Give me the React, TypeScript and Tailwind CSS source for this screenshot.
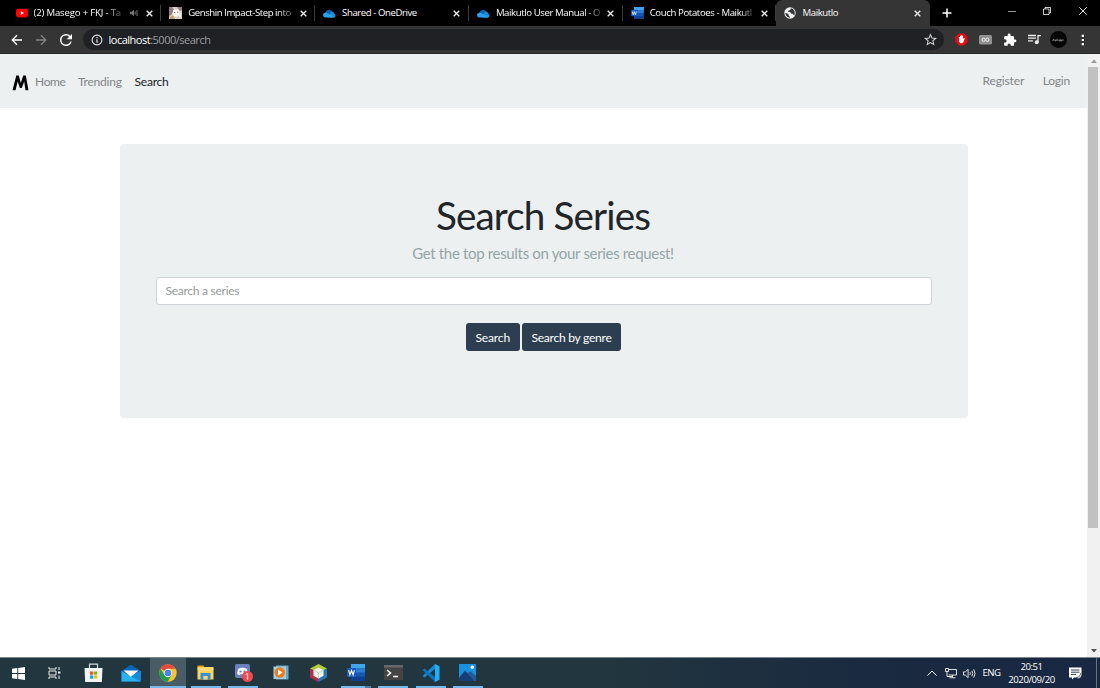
import React from 'react';

const YouTube = () => (
  <svg viewBox="0 0 12 12" className="h-3 w-3 shrink-0"><rect y="1.8" width="12" height="8.6" rx="2.3" fill="#f00" /><path d="M4.8 4.2 8 6.1 4.8 8z" fill="#fff" /></svg>
);
const Genshin = () => (
  <svg viewBox="0 0 13 12" className="h-3 w-[13px] shrink-0"><rect width="13" height="12" fill="#d8cdc8" /><path d="M0 0h3l2 3-3 5-2 1zM8 0h5v3l-2 1z" fill="#8f7f85" /><path d="M4 3l5-1 2 4-3 4-4-1z" fill="#fff4ea" /><path d="M1 10l3-2 2 4H1z" fill="#c5a56b" /><path d="M9 8l3-2v5z" fill="#edf0f6" /><path d="M5 5h1.300v.7H5zM8 4.700h1.300v.7H8z" fill="#515783" /></svg>
);
const OneDrive = () => (
  <svg viewBox="0 0 13 9" className="h-[9px] w-[13px] shrink-0"><path d="M2.200 4A3.800 3.800 0 0 1 9 2.400L12 5 4 8 1 5z" fill="#0864b8" /><path d="M8.200 2.500a3 3 0 0 1 3 2.200 2.100 2.100 0 0 1-.4 3.900H5z" fill="#198edb" /><path d="M0 5.800C.2 4 2.400 3.300 3.800 4.100l7.800 4c-.4.4-.8.5-1.300.5H2.500C1 8.600 0 7.400 0 5.800z" fill="#27a5ec" /></svg>
);
const Word = ({ className }: { className: string }) => (
  <svg viewBox="0 0 18 17" className={className}><path d="M4 0h14v17H4z" fill="#1757ad" /><path d="M4 0h14v4.300H4z" fill="#41a5ee" /><path d="M4 4.300h14v4.200H4z" fill="#2b7cd3" /><path d="M4 12.700h14V17H4z" fill="#103f91" /><rect y="4" width="9" height="9" rx=".7" fill="#185abd" /><path d="m1.600 6.200 1.300 4.800 1.600-4.500 1.600 4.500 1.300-4.800" fill="none" stroke="#fff" strokeWidth="1.100" /></svg>
);
const Globe = () => (
  <svg viewBox="0 0 12 12" className="h-3 w-3 shrink-0"><circle cx="6" cy="6" r="5.700" fill="#f1f3f4" /><path d="M1.300 6 3 6.300l1.700 1.300v1.200l1.200.9v1C3.300 10.600 1.400 8.600 1.300 6zM6.600 1.300l.2 1-1 1-1.600.5-.3 1 2.200.3 1.200 1.600 1.500.1.800 1.300.8.300C11.600 5.400 10 1.600 6.600 1.300z" fill="#35363a" /></svg>
);
const X = () => (
  <svg viewBox="0 0 8 8" className="h-[7px] w-[7px] shrink-0"><path d="m.8.8 6.400 6.400M7.200.8.800 7.200" stroke="#f1f1f1" strokeWidth="1.500" /></svg>
);
const Speaker = () => (
  <svg viewBox="0 0 9 8" className="h-2 w-[9px]"><path d="M0 2.800h1.700L4 .8v6.400L1.700 5.200H0z" fill="#777" /><path d="M5.200 2.500v3M7 1v6" stroke="#777" fill="none" /></svg>
);

type TabProps = { icon: React.ReactNode; title: string; muted?: boolean; textClass: string; active?: boolean };
const Tab = ({ icon, title, muted, textClass, active }: TabProps) => (
  <div className={`flex h-[26px] w-[153.8px] shrink-0 items-center pl-2 ${active ? 'rounded-t-md bg-[#353535] pr-[9px]' : ''}`}>
    <div className="flex min-w-0 flex-1 items-center gap-[6px]">
      {icon}
      <span className={`whitespace-nowrap text-[9.600px] leading-[14px] text-white ${textClass}`}>{title}</span>
    </div>
    {muted && <div className="mr-[7px]"><Speaker /></div>}
    <X />
    {!active && <div className="ml-[7.500px] h-4 w-px bg-[#3c3c3c]" />}
  </div>
);

const TabStrip = () => (
  <div className="flex h-[26px] bg-black">
    <div className="flex pl-[7.500px]">
      <Tab icon={<YouTube />} title="(2) Masego + FKJ - Ta" muted textClass="tracking-[-0.17px] [mask-image:linear-gradient(90deg,#000_82%,#0004)]" />
      <Tab icon={<Genshin />} title="Genshin Impact-Step into" textClass="tracking-[-0.45px] [mask-image:linear-gradient(90deg,#000_86%,#0006)]" />
      <Tab icon={<OneDrive />} title="Shared - OneDrive" textClass="tracking-[-0.43px]" />
      <Tab icon={<OneDrive />} title="Maikutlo User Manual - O" textClass="tracking-[-0.4px] [mask-image:linear-gradient(90deg,#000_85%,#0004)]" />
      <Tab icon={<Word className="h-3 w-[13px] shrink-0" />} title="Couch Potatoes - Maikutl" textClass="tracking-[-0.38px] [mask-image:linear-gradient(90deg,#000_88%,#0004)]" />
      <Tab icon={<Globe />} title="Maikutlo" active textClass="tracking-[-0.4px]" />
    </div>
    <div className="flex flex-1 items-center pl-[11.500px]">
      <svg viewBox="0 0 10 10" className="h-[10px] w-[10px]"><path d="M5 .5v9M.5 5h9" stroke="#fff" strokeWidth="1.500" /></svg>
    </div>
    <div className="flex w-[92px] items-start justify-between pr-[13.500px] pt-[7px]">
      <svg viewBox="0 0 8 8" className="h-2 w-2"><path d="M0 4.500h8" stroke="#bbb" strokeWidth=".8" /></svg>
      <svg viewBox="0 0 8 8" className="h-2 w-2"><path d="M.5 2h5.500v5.500H.5zM2 2V.5h5.500V6H6" fill="none" stroke="#fff" strokeWidth=".8" /></svg>
      <svg viewBox="0 0 8 8" className="h-2 w-2"><path d="m.3.3 7.400 7.400M7.700.3.300 7.700" stroke="#fff" strokeWidth=".9" /></svg>
    </div>
  </div>
);

const Toolbar = () => (
  <div className="flex h-7 items-center border-b border-[#292929] bg-[#353535]">
    <div className="flex w-[83px] items-center gap-[12.300px] pl-[11px]">
      <svg viewBox="0 0 12 12" className="h-3 w-3"><path d="M11 6H1.600M6 1.300 1.300 6 6 10.700" fill="none" stroke="#fff" strokeWidth="1.400" /></svg>
      <svg viewBox="0 0 12 12" className="h-3 w-3"><path d="M1 6h9.400M6 1.300 10.700 6 6 10.700" fill="none" stroke="#858585" strokeWidth="1.300" /></svg>
      <svg viewBox="4 4 16 16" className="h-3 w-3"><path d="M17.650 6.350A8 8 0 1 0 19.730 14h-2.080A6 6 0 1 1 12 6c1.660 0 3.140.69 4.220 1.780L13 11h7V4z" fill="#fff" /></svg>
    </div>
    <div className="flex h-[21px] w-[861px] items-center rounded-full bg-[#202124] pl-2 pr-[7px]">
      <svg viewBox="0 0 12 12" className="h-3 w-3"><circle cx="6" cy="6" r="4.900" fill="none" stroke="#e4e4e4" strokeWidth="1.100" /><path d="M6 5.300v3.500M6 3v1.200" stroke="#e4e4e4" strokeWidth="1.200" /></svg>
      <span className="ml-[5.500px] flex-1 text-[11px] leading-4 tracking-[-0.49px] text-[#9c9da0]"><span className="text-white">localhost</span>:5000/search</span>
      <svg viewBox="0 0 24 24" className="h-[13px] w-[13px]"><path d="m12 3 2.700 6.300 6.900.600-5.200 4.500 1.600 6.700L12 17.500l-6 3.600 1.600-6.700-5.200-4.500 6.900-.6z" fill="none" stroke="#d4d4d4" strokeWidth="1.900" /></svg>
    </div>
    <div className="flex flex-1 items-center pl-[10.500px]">
      <svg viewBox="0 0 13 13" className="h-[13px] w-[13px]"><path d="M3.900.4h5.200l3.500 3.500v5.200l-3.500 3.500H3.900L.4 9.100V3.900z" fill="#e40d12" /><path d="M4 6V4h1v1.700V2.700h1V5 2.200h1V5 2.700h1v3l1.300-.8.5.500-1.700 4-1.300.9H5.500L4 8.800z" fill="#fff" /></svg>
      <svg viewBox="0 0 13 10" className="ml-[11px] h-[10px] w-[13px]"><rect width="13" height="9.500" rx="1.500" fill="#929292" /><circle cx="4.700" cy="4.800" r="1.600" fill="none" stroke="#eee" /><circle cx="8.300" cy="4.800" r="1.600" fill="none" stroke="#eee" /></svg>
      <svg viewBox="0 0 24 24" className="ml-[11px] h-[14px] w-[14px]"><path d="M20.500 11H19V7a2 2 0 0 0-2-2h-4V3.500a2.500 2.500 0 0 0-5 0V5H4a2 2 0 0 0-2 2v3.800h1.500a2.700 2.700 0 0 1 0 5.400H2V20a2 2 0 0 0 2 2h3.800v-1.500a2.700 2.700 0 0 1 5.400 0V22H17a2 2 0 0 0 2-2v-4h1.500a2.500 2.500 0 0 0 0-5z" fill="#fff" /></svg>
      <svg viewBox="0 0 13 11" className="ml-[11px] h-[11px] w-[13px]"><path d="M0 1.500h8M0 4.200h8M0 6.900h5" stroke="#eee" strokeWidth="1.300" /><path d="M10 8V1.600h3" fill="none" stroke="#eee" strokeWidth="1.300" /><circle cx="8.700" cy="8.300" r="2" fill="#eee" /></svg>
      <div className="ml-[9px] flex h-[17px] w-[17px] items-center justify-center rounded-full bg-[#050505]">
        <svg viewBox="0 0 12 4" className="h-1 w-3"><path d="m.5 3 1-2 .7 2M3 1.500v1.500h1V1.500M5 .7V3m0-1h1.500M7 2h1.500v1H7zM9 1v2h1V2M11 1v2" fill="none" stroke="#aaa" strokeWidth=".6" /></svg>
      </div>
      <svg viewBox="0 0 4 12" className="ml-[14.500px] h-3 w-1"><path d="M.7.800h2.300v2.200H.7zM.7 4.900h2.300v2.200H.7zM.7 9h2.300v2.200H.7z" fill="#fff" /></svg>
    </div>
  </div>
);

const Page = () => (
  <div className="flex h-[603px] bg-white font-['Lato',sans-serif]">
    <main className="flex-1">
      <nav className="flex h-[54px] items-center bg-[#ecf0f1] pl-3 pr-[17px] text-[12.080px] tracking-[-0.25px] text-[#838586]">
        <svg viewBox="0 0 17 16" className="mt-[3px] h-4 w-[17px]"><path d="M.5 15.300 4.300.5h2.500L8.800 8 11.300.5h2.500l2.700 14.800h-3L12.200 6.500 9.800 13H7.900L5.700 6.500 3.500 15.300z" fill="#000" /></svg>
        <span className="ml-[6px] mt-[2px] w-[43px] tracking-[-0.4px]">Home</span>
        <span className="mt-[2px] w-[56.500px]">Trending</span>
        <span className="mt-[2px] text-[#202427]">Search</span>
        <span className="ml-auto tracking-[-0.15px]">Register</span>
        <span className="ml-[18.500px]">Login</span>
      </nav>
      <section className="ml-[120px] mt-[36.400px] flex h-[273.600px] w-[848px] flex-col items-center rounded bg-[#ecf0f1] px-9 pt-[48px]">
        <h1 className="mr-[2px] text-[38.650px] leading-[46px] tracking-[-0.86px] text-[#212529]">Search Series</h1>
        <p className="mr-[2px] mt-[4px] text-[15px] leading-[22px] tracking-[-0.33px] text-[#95a5a6]">Get the top results on your series request!</p>
        <input aria-label="Search a series" placeholder="Search a series" className="mt-[12.600px] h-7 w-full rounded-[3px] border border-[#ced4da] bg-white px-[8.500px] text-[12.080px] tracking-[-0.3px] outline-none placeholder:text-[#959c9d]" />
        <div className="mr-px mt-[18px] flex gap-[2.500px] text-[12.080px] tracking-[-0.27px] text-white">
          <button className="h-7 w-[53.500px] rounded-[3px] bg-[#2c3e50] pt-[2px] tracking-[-0.15px]">Search</button>
          <button className="h-7 w-[99px] rounded-[3px] bg-[#2c3e50] pt-[2px]">Search by genre</button>
        </div>
      </section>
    </main>
    <div className="flex w-[13px] flex-col items-center bg-[#f1f1f1]">
      <div className="flex h-[13px] items-center"><svg viewBox="0 0 6 4" className="h-1 w-1.5"><path d="m0 4 3-3.500L6 4z" fill="#999" /></svg></div>
      <div className="mr-px h-[461px] w-[10px] bg-[#c1c1c1]" />
      <div className="mt-auto flex h-[13px] items-center"><svg viewBox="0 0 6 4" className="h-1 w-1.5"><path d="M0 0h6L3 3.500z" fill="#505050" /></svg></div>
    </div>
  </div>
);

const Store = () => (
  <svg viewBox="0 0 19 19" className="h-[19px] w-[19px]"><path d="M5.500 6V1.200h8V6" fill="none" stroke="#d2d7d9" strokeWidth="1.200" /><path d="M.5 5h18l-.7 14H1.200z" fill="#f4f4f4" /><path d="M6 8.500h3.200v3.200H6z" fill="#f25022" /><path d="M9.900 8.500h3.200v3.200H9.900z" fill="#7fba00" /><path d="M6 12.400h3.200v3.200H6z" fill="#00a4ef" /><path d="M9.900 12.400h3.200v3.200H9.900z" fill="#ffb900" /></svg>
);
const Mail = () => (
  <svg viewBox="0 0 20 18" className="h-[18px] w-5"><path d="M.5 7 10 .5 19.500 7v10.500H.5z" fill="#0966b4" /><path d="M.5 7 10 12.500 19.500 7v10.500H.5z" fill="#29b4ef" /><path d="M2.500 6.500h15L10 13z" fill="#f5f8fa" /><path d="M19.500 7v10.500L10 12.500z" fill="#168bd7" /></svg>
);
const Chrome = () => (
  <svg viewBox="0 0 18 18" className="h-[18px] w-[18px]"><circle cx="9" cy="9" r="8.700" fill="#fbc42f" /><path d="M9 9 1.500 4.600A8.700 8.700 0 0 1 16.600 4.700H9z" fill="#e24a3b" /><path d="M1.500 4.600A8.700 8.700 0 0 0 8.600 17.700L12.700 11 9 9 5.300 11z" fill="#229b55" /><circle cx="9" cy="9" r="4.200" fill="#f3f3f3" /><circle cx="9" cy="9" r="3.300" fill="#4384ef" /></svg>
);
const Folder = () => (
  <svg viewBox="0 0 17 15" className="h-[15px] w-[17px]"><path d="M.5.500h6l1.200 2H.5z" fill="#e79b12" /><path d="M.5 2h16v12.500H.5z" fill="#ffd45f" /><path d="M3.500 8h10v6.500h-10z" fill="#3990d5" /><path d="M6.300 11h4.400v3.500H6.300z" fill="#f7d577" /><path d="M.5 4h16" stroke="#ffe69b" /></svg>
);
const Discord = () => (
  <div className="relative h-[17px] w-[17px]">
    <svg viewBox="0 0 17 17" className="h-[17px] w-[17px]"><path d="M2 0h11a2 2 0 0 1 2 2v14l-3-2H2a2 2 0 0 1-2-2V2a2 2 0 0 1 2-2z" fill="#6c7fbd" /><path d="M3 5c2-1.800 7-1.800 9 0l1 5-2.500 1.200-1-1h-4l-1 1L2 10z" fill="#f2f3fa" /><circle cx="5.500" cy="7.500" r="1.100" fill="#6c7fbd" /><circle cx="9.500" cy="7.500" r="1.100" fill="#6c7fbd" /></svg>
    <span className="absolute left-[7px] top-[7px] flex h-[11px] w-[11px] items-center justify-center rounded-full bg-[#ee4b50] text-[9px] leading-none text-white">1</span>
  </div>
);
const Player = () => (
  <svg viewBox="0 0 16 15" className="h-[15px] w-4"><path d="M3 .5h12.500v14H3z" fill="#65a9ca" /><path d="M.5 1.500h12.500v12.500H.5z" fill="#a7ccdb" /><circle cx="6.800" cy="7.500" r="5.200" fill="#f17b1c" /><path d="M5 4.500v6l4.500-3z" fill="#fff" /></svg>
);
const Cube = () => (
  <svg viewBox="0 0 17 18" className="h-[18px] w-[17px]"><path d="M8.500 0 17 4.500 8.500 9 0 4.500z" fill="#b0cb3a" /><path d="M0 4.500 8.500 9v9L0 13.500z" fill="#b52e4c" /><path d="M17 4.500 8.500 9v9l8.500-4.500z" fill="#2875b8" /><path d="m8.500 3.500 5 2.700v5.600l-5 2.700-5-2.700V6.200z" fill="#f5f7ee" /><path d="m3.500 6.200 5 2.700 5-2.700M8.500 9v5.500" fill="none" stroke="#bfc9ad" strokeWidth=".8" /></svg>
);
const Terminal = () => (
  <svg viewBox="0 0 19 15" className="h-[15px] w-[19px]"><rect width="19" height="15" rx=".8" fill="#444" /><path d="M0 0h19v2.500H0z" fill="#686868" /><path d="m3 5 3.500 3L3 11M9 11.500h5" fill="none" stroke="#fff" strokeWidth="1.500" /></svg>
);
const Code = () => (
  <svg viewBox="0 0 18 18" className="h-[18px] w-[18px]"><path d="M13 0v5L2.500 13.500.5 12z" fill="#168bd2" /><path d="M.5 6 2.500 4.500 13 13v5z" fill="#0874bd" /><path d="m13 0 4.500 2.200v13.600L13 18z" fill="#29aaf4" /></svg>
);
const Photos = () => (
  <svg viewBox="0 0 17 17" className="h-[17px] w-[17px]"><path d="M0 0h17v17H0z" fill="#1991df" /><path d="M0 14 6 6.500 16 17H0z" fill="#153f76" /><path d="m8.500 9.300 3-2.100L17 12v5h-1z" fill="#225b97" /><circle cx="13.300" cy="3.300" r="1.700" fill="#fff" /></svg>
);

const Task = ({ children, state = 'open' }: { children: React.ReactNode; state?: 'idle' | 'open' | 'active' | 'multi' }) => (
  <div className="flex h-full w-[37.450px] flex-col items-center">
    <div className={`flex h-[28px] w-[36px] items-center justify-center pt-px ${state === 'active' ? 'bg-[#4a5c65]' : ''}`}>{children}</div>
    {state === 'active' && <div className="h-[2px] w-[36px] bg-[#76b9ed]" />}
    {state === 'open' && <div className="h-[2px] w-[30px] bg-[#76b9ed]" />}
    {state === 'multi' && <div className="flex"><div className="h-[2px] w-[24px] bg-[#76b9ed]" /><div className="h-[2px] w-[6px] bg-[#527f9d]" /></div>}
  </div>
);

const Taskbar = () => (
  <footer className="flex h-[31px] border-t border-[#7c878b] bg-[linear-gradient(90deg,#22363f_0%,#22363f_55%,#1a2a40_78%,#192743_100%)]">
    <div className="flex w-[36px] items-center justify-center"><svg viewBox="0 0 13 13" className="h-[13px] w-[13px]"><path d="M0 1.800 5.300 1v5H0zM6.200.9 13 0v6H6.200zM0 6.900h5.300v5L0 11.200zM6.200 6.900H13V13l-6.800-1z" fill="#fff" /></svg></div>
    <div className="mr-[1.900px] flex w-[37px] items-center justify-center"><svg viewBox="0 0 13 12" className="h-3 w-[13px]"><path d="M1 0v2h7V0M1 12v-2h7v2M1 4h7v4H1zM11 0v3M11 8.500V12" fill="none" stroke="#eee" /><path d="M10 4.500h2.500v2H10z" fill="#eee" /></svg></div>
    <Task state="idle"><Store /></Task>
    <Task state="idle"><Mail /></Task>
    <Task state="active"><Chrome /></Task>
    <Task><Folder /></Task>
    <Task><Discord /></Task>
    <Task state="idle"><Player /></Task>
    <Task state="idle"><Cube /></Task>
    <Task state="multi"><Word className="h-[17px] w-[18px]" /></Task>
    <Task><Terminal /></Task>
    <Task><Code /></Task>
    <Task><Photos /></Task>
    <div className="ml-auto flex items-center text-[9.600px] text-white">
      <svg viewBox="0 0 10 6" className="h-1.5 w-[10px]"><path d="m.5 5.500 4.500-4.500 4.500 4.500" fill="none" stroke="#fff" /></svg>
      <svg viewBox="0 0 12 12" className="ml-[8px] h-3 w-3"><path d="M3.500 2.500h8v5.500h-8M7.500 8v2.500M4.500 10.800h6M.5 1.500h3v3h-3zM2 4.500v5h5" fill="none" stroke="#f4f4f4" strokeWidth=".9" /></svg>
      <svg viewBox="0 0 14 11" className="ml-[6px] h-[11px] w-[13px]"><path d="M.5 3.800h2L5.500 1v9L2.500 7.200h-2zM7.500 4q1 1.500 0 3M9.500 2.500q2 3 0 6M11.500 1q3 4.500 0 9" fill="none" stroke="#eee" /></svg>
      <span className="ml-[7px] w-[18px] whitespace-nowrap tracking-[-0.500px]">ENG</span>
      <div className="ml-[7px] mr-px w-[48px] whitespace-nowrap text-center leading-[13.500px] tracking-[-0.450px]"><div>20:51</div><div>2020/09/20</div></div>
      <svg viewBox="0 0 13 13" className="ml-[12px] h-[13px] w-[13px]"><path d="M0 .5h12.500v8l-2 2H5l-2 2v-2H0z" fill="#fff" /><path d="M2 3h8.500M2 5.200h8.500M2 7.400h5" stroke="#1b2944" strokeWidth=".9" /><path d="M7.500 10.500a4 4 0 0 0 4-4 2.700 2.700 0 1 1-4 4z" fill="#fff" stroke="#1b2944" strokeWidth=".6" /></svg>
      <div className="ml-[14.500px] mr-[3px] h-[30px] w-px bg-[#687282]" />
    </div>
  </footer>
);

export default function App() {
  return (
    <div className="flex h-[688px] w-[1100px] flex-col overflow-hidden font-['Open_Sans','Noto_Sans',sans-serif]">
      <TabStrip />
      <Toolbar />
      <Page />
      <Taskbar />
    </div>
  );
}
